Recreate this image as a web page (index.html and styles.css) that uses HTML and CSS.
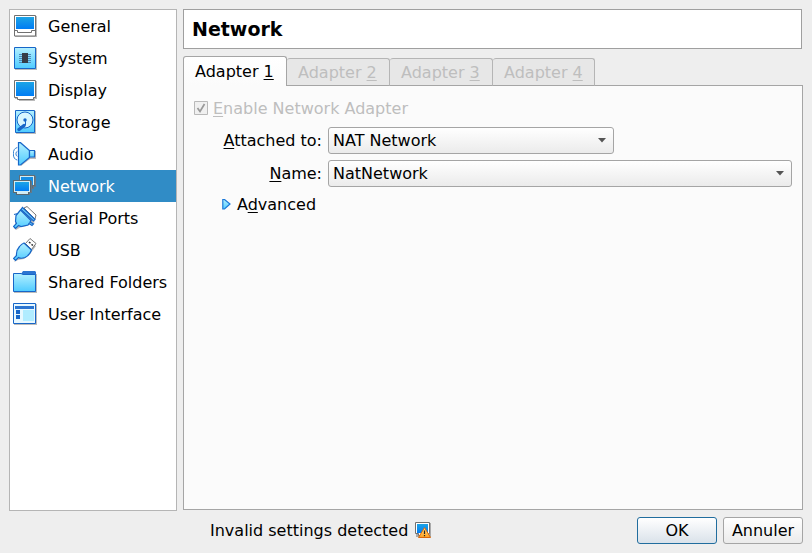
FILE: index.html
```
<!DOCTYPE html>
<html lang="en">
<head>
<meta charset="utf-8">
<title>Settings</title>
<link rel="stylesheet" href="styles.css">
</head>
<body>
<svg class="defs" width="0" height="0" aria-hidden="true">
  <defs>
    <linearGradient id="screen" x1="0" y1="0" x2="0" y2="1"><stop offset="0" stop-color="#1ca4e6"/><stop offset="1" stop-color="#007cf4"/></linearGradient>
    <linearGradient id="sky" x1="0" y1="0" x2="0" y2="1"><stop offset="0" stop-color="#b4f0ff"/><stop offset="1" stop-color="#4fcbff"/></linearGradient>
    <linearGradient id="warn" x1="0" y1="0" x2="0" y2="1"><stop offset="0" stop-color="#ffe58a"/><stop offset="1" stop-color="#ff9d1c"/></linearGradient>
  </defs>
</svg>
<div class="dialog">
  <nav class="sidebar">
    <a class="item"><svg class="icon" viewBox="0 0 24 24"><path d="M2 2h22v21H2z" fill="#bbb"/><path d="M1.500 1.500h21v20.500h-21z" fill="#fff" stroke="#707070"/><path d="M1.500 16.500h3v2h14v-2h4" fill="none" stroke="#707070"/><path d="M3 3h18v12H3z" fill="url(#screen)"/></svg><span>General</span></a>
    <a class="item"><svg class="icon" viewBox="0 0 24 24"><path d="M2 2h22v22H2z" fill="#bbb"/><path d="M1.500 1.500h21v21h-21z" fill="url(#sky)" stroke="#1766c8"/><path d="M6 8.500h12M6 10.500h12M6 12.500h12M6 14.500h12M6 16.500h12" stroke="#4d88b8"/><path d="M9 7h6v10H9z" fill="#373d48"/></svg><span>System</span></a>
    <a class="item"><svg class="icon" viewBox="0 0 24 24"><path d="M2 3h22v18h-2v2H6v-2H2z" fill="#bbb"/><path d="M1.500 2.500h21v17h-2v2h-16v-2h-3z" fill="#fff" stroke="#707070"/><path d="M3 4h18v14H3z" fill="url(#screen)"/></svg><span>Display</span></a>
    <a class="item"><svg class="icon" viewBox="0 0 24 24"><path d="M3 1h20v23H3z" fill="#bbb"/><path d="M2.500.5h19v22h-19z" fill="url(#sky)" stroke="#1766c8"/><circle cx="12" cy="10" r="8" fill="#d9f7ff" stroke="#1766c8"/><circle cx="12" cy="10" r="1.700" fill="#1766c8"/><path d="M12.500 10.500v4.500l-2 1" fill="none" stroke="#1766c8"/><path d="M11 15.500 6 19.500" stroke="#1766c8" stroke-width="3.500" stroke-linecap="round"/></svg><span>Storage</span></a>
    <a class="item"><svg class="icon" viewBox="0 0 24 24"><path d="M7 2l10 7h6v8h-6l-9 7z" fill="#bbb"/><path d="M5.500.700h2l9 7.800v7l-9 7.500h-2z" fill="url(#sky)" stroke="#1766c8" stroke-width="1.200"/><path d="M16.500 8.500h5v6.500h-5z" fill="url(#sky)" stroke="#1766c8" stroke-width="1.200"/><path d="M4.300 5.500q-4 1-4 6.300t4 6.300M4.400 9.300q-1.500.5-1.500 2.500t1.500 2.500" fill="none" stroke="#2e7fd0"/></svg><span>Audio</span></a>
    <a class="item selected"><svg class="icon" viewBox="0 0 24 24"><path d="M7 2h16v11h-2v2H11v-2H7z" fill="#64798a"/><path d="M6 1h16v11h-2v2H9v-2H6z" fill="#626e76"/><path d="M7 2h14v9h-2v2H9v-2H7z" fill="#d2edf5"/><path d="M8 3h12v8H8z" fill="#168ee5"/><path d="M1 7h18v12h-2v2H4v-2H1z" fill="#64798a"/><path d="M0 6h18v12h-2v3H3v-2H0z" fill="#5b6870"/><path d="M1 7h16v11h-2v2H4v-2H1z" fill="#d2edf5"/><path d="M2 8h14v9H2z" fill="url(#screen)"/></svg><span>Network</span></a>
    <a class="item"><svg class="icon" viewBox="0 0 24 24"><path d="m11 2 3-1.500 9 8.500-1 4z" fill="#fff" stroke="#777"/><path d="m9 4 13 12-8 4-6 1-5 3-2-2 2-8z" fill="#bbb"/><path d="m7.500 4 10.500 10.500-3 4.500-7 1.500-2.500-1-3 3-2-2 3-3-1-2L3 9.500z" fill="url(#sky)" stroke="#1766c8" stroke-width="1.200"/><path d="m9.500 1.500 12.500 12-1.500 1.500L8 3.500zM1 8.500l4-1M17 16l3.500 2-1.500 1.500-3-2" fill="#73cff9" stroke="#1766c8" stroke-width="1.200"/></svg><span>Serial Ports</span></a>
    <a class="item"><svg class="icon" viewBox="0 0 24 24"><path d="m16 2 7 6-6 8-6 5-6 1-4 2z" fill="#bbb"/><path d="m12.500 5.500 4.500-5 6 5-4.500 6z" fill="#fff" stroke="#777"/><path d="m16 4 1.500 1.300M18.500 6.300 20 7.500" stroke="#333" stroke-width="1.500"/><path d="m11 5 7.500 7q-1.500 5-6.500 7.500-4 1.500-6.500 0l-3 3-2-2 3-3q-.5-5 3-9 2-2.500 4.500-3.500z" fill="url(#sky)" stroke="#1766c8" stroke-width="1.200"/></svg><span>USB</span></a>
    <a class="item"><svg class="icon" viewBox="0 0 24 24"><path d="M1 4h23v19H1z" fill="#bbb"/><path d="m8 4 2-3h12l1 1v3z" fill="#2c75d1"/><path d="M.5 3.500h7.500l2 1h12.500v17H.5z" fill="url(#sky)" stroke="#1766c8"/></svg><span>Shared Folders</span></a>
    <a class="item"><svg class="icon" viewBox="0 0 24 24"><path d="M1 2h23v21H1z" fill="#bbb"/><path d="M.5 1.500h22v20H.5z" fill="#e7f8ff" stroke="#1766c8"/><path d="M2 4h19v3H2z" fill="#2c75d1"/><path d="M3 8h4v4H3zm0 5h4v4H3z" fill="#1766c8"/><path d="M10 8h11v11H10z" fill="#b0ecff"/></svg><span>User Interface</span></a>
  </nav>
  <main class="page">
    <h1 class="title">Network</h1>
    <div class="tabs">
      <div class="tab active">Adapter <u>1</u></div>
      <div class="tab">Adapter <u>2</u></div>
      <div class="tab">Adapter <u>3</u></div>
      <div class="tab">Adapter <u>4</u></div>
    </div>
    <section class="panel">
      <div class="check"><svg class="checkbox" viewBox="0 0 14 14"><path d="M.5.5h13v13H.5z" fill="#f0f0f0" stroke="#b9b9b9"/><path d="m3.500 7 2.500 3.500L10.500 3" fill="none" stroke="#999" stroke-width="1.700"/></svg><span><u>E</u>nable Network Adapter</span></div>
      <div class="form">
        <label class="label"><u>A</u>ttached to:</label>
        <div class="combo short"><span>NAT Network</span><svg class="arrow" viewBox="0 0 8 5"><path d="M0 0h8L4 4.500z"/></svg></div>
        <label class="label"><u>N</u>ame:</label>
        <div class="combo"><span>NatNetwork</span><svg class="arrow" viewBox="0 0 8 5"><path d="M0 0h8L4 4.500z"/></svg></div>
      </div>
      <div class="advanced"><svg class="expander" viewBox="0 0 9 11"><path d="M.8.500h1.700L8 5 2.500 10H.8z" fill="url(#sky)" stroke="#1b78d8" stroke-width="1.200"/></svg><span>A<u>d</u>vanced</span></div>
    </section>
  </main>
  <footer class="footer">
    <div class="status"><span>Invalid settings detected</span><svg class="status-icon" viewBox="0 0 16 16"><path d="M1 1h15v14H1z" fill="#aaa"/><path d="M.5.5h14v11h-1v2h-10v-2h-3z" fill="#fff" stroke="#707070"/><path d="M2 2h11v9H2z" fill="url(#screen)"/><path d="M9.500 5.500 15.500 15.500h-12z" fill="url(#warn)" stroke="#d8670b" stroke-linejoin="round"/><path d="M9.500 8.500v3.500M9.500 13v1.200" stroke="#222" stroke-width="1.200"/></svg></div>
    <button class="button primary">OK</button>
    <button class="button">Annuler</button>
  </footer>
</div>
</body>
</html>
```
FILE: styles.css
```
* { box-sizing: border-box; }
body {
  margin: 0;
  background: #eee;
  color: #000;
  font: 16px/20px "DejaVu Sans", sans-serif;
}
.defs { display: block; height: 0; }
u { text-decoration-thickness: 1px; text-underline-offset: 2px; text-decoration-skip-ink: none; }
svg { display: block; flex: none; }
.dialog {
  width: 812px;
  height: 553px;
  padding: 9px 9px 8px;
  display: grid;
  grid-template-columns: 168px 620px;
  grid-template-rows: 502px 28px;
  column-gap: 6px;
  row-gap: 6px;
}
.sidebar { background: #fff; border: 1px solid #b5b5b5; }
.item { display: flex; align-items: center; height: 32px; padding-left: 3px; gap: 11px; white-space: nowrap; }
.item span, .check span, .advanced span { padding-top: 2px; }
.icon { width: 24px; height: 24px; }
.selected { background: #308cc6; color: #fff; }
.page { display: flex; flex-direction: column; height: 501px; }
.title {
  width: 619px;
  height: 40px;
  margin: 0 0 7px;
  padding-left: 8px;
  border: 1px solid #9f9f9f;
  background: #fff;
  font-size: 19px;
  line-height: 38px;
}
.tabs { display: flex; align-items: flex-end; height: 30px; margin-bottom: -1px; z-index: 1; }
.tab {
  width: 103px;
  height: 28px;
  padding: 4px 0 0 11px;
  border: 1px solid #b5b5b5;
  border-left: 0;
  border-bottom-color: #a5a5a5;
  border-radius: 3px 3px 0 0;
  background: #e7e7e7;
  color: #bebebe;
  white-space: nowrap;
}
.tab:last-child { width: 102px; }
.tab.active {
  width: 104px;
  height: 30px;
  padding-top: 5px;
  border: 1px solid #a5a5a5;
  border-bottom: 0;
  background: linear-gradient(#fff, #fbfbfb);
  color: #000;
}
.panel { flex: 1; border: 1px solid #a5a5a5; background: #fbfbfb; padding: 12px 10px; }
.check { display: flex; align-items: center; gap: 5px; height: 20px; color: #bebebe; }
.checkbox { width: 14px; height: 14px; }
.form { display: grid; grid-template-columns: 128px 464px; grid-template-rows: 27px 27px; column-gap: 6px; row-gap: 6px; margin-top: 9px; }
.label { text-align: right; align-self: center; }
.combo {
  display: flex;
  align-items: center;
  justify-content: space-between;
  padding: 0 7px 0 4px;
  border: 1px solid #a5a5a5;
  border-radius: 3px;
  background: linear-gradient(#fff, #ebebeb);
}
.short { width: 286px; }
.arrow { width: 8px; height: 5px; fill: #555; }
.advanced { display: flex; align-items: center; gap: 6px; height: 20px; margin: 7px 0 0 28px; }
.expander { width: 9px; height: 11px; }
.footer { grid-column: 1 / -1; display: flex; gap: 6px; width: 794px; height: 27px; }
.status { display: flex; align-items: center; gap: 7px; margin: 0 auto 0 201px; }
.status-icon { width: 16px; height: 16px; margin-bottom: 1px; }
.button {
  width: 80px;
  height: 27px;
  padding: 0;
  border: 1px solid #a5a5a5;
  border-radius: 3px;
  background: linear-gradient(#fff, #ebebeb);
  color: #000;
  font: inherit;
}
.primary { border-color: #216d9e; background: linear-gradient(#fff, #dae2ea); }
```
